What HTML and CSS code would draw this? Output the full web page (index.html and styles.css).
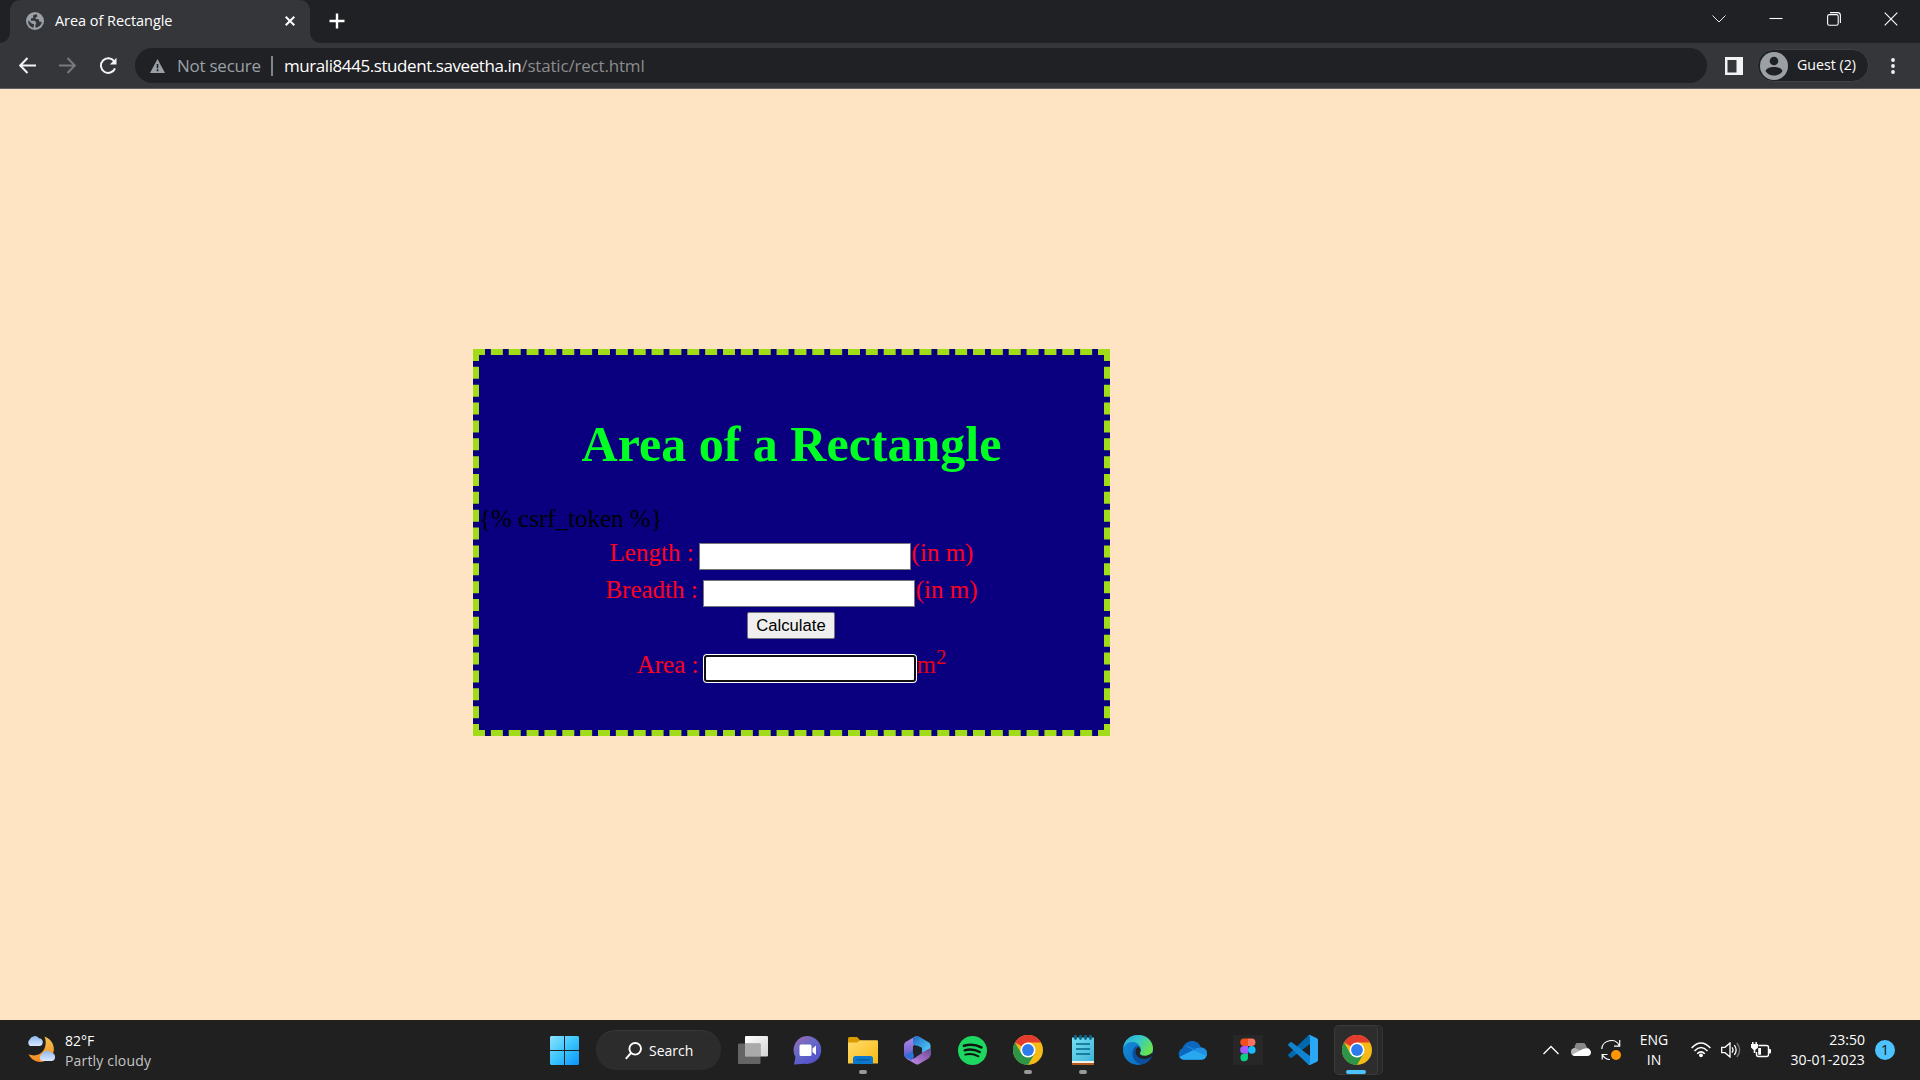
FILE: index.html
```html
<!DOCTYPE html>
<html lang="en">
<head>
<meta charset="utf-8">
<title>Area of Rectangle</title>
<link rel="stylesheet" href="styles.css">
</head>
<body>
<svg class="defs" width="0" height="0" aria-hidden="true">
  <defs>
    <linearGradient id="win" x1="0" y1="0" x2="1" y2="1"><stop offset="0" stop-color="#8be3ff"/><stop offset=".5" stop-color="#3bc5fc"/><stop offset="1" stop-color="#0a93fa"/></linearGradient>
    <linearGradient id="moon" x1="0" y1="0" x2="0" y2="1"><stop offset="0" stop-color="#f2c14c"/><stop offset="1" stop-color="#f58a1f"/></linearGradient>
    <linearGradient id="cloud" x1="0" y1="0" x2="0" y2="1"><stop offset="0" stop-color="#8fb7ee"/><stop offset="1" stop-color="#d9e8ff"/></linearGradient>
    <linearGradient id="folder" x1="0" y1="0" x2="1" y2="1"><stop offset="0" stop-color="#ffdc6a"/><stop offset="1" stop-color="#f9b915"/></linearGradient>
    <linearGradient id="chat" x1="0" y1="0" x2=".7" y2="1"><stop offset="0" stop-color="#a56bb0"/><stop offset=".45" stop-color="#6669c6"/><stop offset="1" stop-color="#5250cc"/></linearGradient>
    <linearGradient id="ma" x1="0" y1="0" x2="0" y2="1"><stop offset="0" stop-color="#b58be6"/><stop offset="1" stop-color="#4d54c9"/></linearGradient>
    <linearGradient id="mb" x1="0" y1="0" x2="1" y2="1"><stop offset="0" stop-color="#2368c8"/><stop offset="1" stop-color="#55ddff"/></linearGradient>
    <linearGradient id="mc" x1="0" y1="1" x2="1" y2="0"><stop offset="0" stop-color="#c893f5"/><stop offset="1" stop-color="#6d438f"/></linearGradient>
    <linearGradient id="ea" x1="0" y1="0" x2="1" y2=".5"><stop offset="0" stop-color="#2da9dc"/><stop offset=".5" stop-color="#35c7ce"/><stop offset="1" stop-color="#66e34f"/></linearGradient>
    <linearGradient id="eb" x1="0" y1="0" x2="1" y2="1"><stop offset="0" stop-color="#168fda"/><stop offset="1" stop-color="#0867bb"/></linearGradient>
    <linearGradient id="note" x1="0" y1="0" x2="1" y2="1"><stop offset="0" stop-color="#76dff4"/><stop offset="1" stop-color="#3fb5d8"/></linearGradient>
    <linearGradient id="tv" x1="0" y1="0" x2="1" y2="1"><stop offset="0" stop-color="#fff"/><stop offset="1" stop-color="#d4d4d4"/></linearGradient>
    <symbol id="chrome" viewBox="0 0 30 30">
      <circle cx="15" cy="15" r="15" fill="#f5ba16"/>
      <path d="M15 15 2 7.5A15 15 0 0 1 28 7.5H15Z" fill="#e33b2e"/>
      <path d="M2 7.5A15 15 0 0 0 15 30L21.5 18.7 15 15 8.5 18.8Z" fill="#2c9547"/>
      <circle cx="15" cy="15" r="7.5" fill="#fff"/><circle cx="15" cy="15" r="5.9" fill="#2d7bec"/>
    </symbol>
  </defs>
</svg>

<header class="browser">
  <div class="tabs">
    <div class="tab">
      <svg class="globe" width="18" height="18" viewBox="0 0 18 18"><circle cx="9" cy="9" r="9" fill="#9aa0a6"/><path d="M10.5 2 6.8 3.6 7.4 5.8 5 6.5 4.8 8.8H8.8C10 9 9.2 10.4 10.3 11L9.3 13.2 9.5 15.6C12.8 15.6 15.3 13 15.8 10L13.3 9.5 12.7 7.3 9.8 7 9.5 5.5 11.5 4.6ZM2.2 8.2 6 11.7 8.1 12 7.5 15.8C4.2 15 1.8 12 2.2 8.2Z" fill="#35363a"/></svg>
      <span class="tab-title">Area of Rectangle</span>
      <svg class="tab-close" width="10" height="10" viewBox="0 0 10 10"><path d="M.7.7l8.6 8.6M9.3.7.7 9.3" stroke="#fff" stroke-width="2"/></svg>
    </div>
    <svg class="new-tab" width="16" height="16" viewBox="0 0 16 16"><path d="M8 .5v15M.5 8h15" stroke="#fff" stroke-width="2.4"/></svg>
    <div class="window-controls">
      <svg width="14" height="14" viewBox="0 0 14 14"><path d="M.5 3.5 7 10l6.5-6.5"/></svg>
      <svg width="14" height="14" viewBox="0 0 14 14"><path d="M.5 6.500h13"/></svg>
      <svg width="14" height="14" viewBox="0 0 14 14"><rect x=".6" y="2.6" width="10.6" height="10.6" rx="1.8"/><path d="M3 .6H10.6A2.8 2.8 0 0 1 13.4 3.4V11"/></svg>
      <svg width="14" height="14" viewBox="0 0 14 14"><path d="M.7.7l12.6 12.6M13.3.7.7 13.3"/></svg>
    </div>
  </div>
  <div class="toolbar">
    <svg class="nav" width="17" height="17" viewBox="0 0 17 17"><path d="M17 8.500H2M8.500 1 1.200 8.500 8.500 16" fill="none" stroke="#f1f3f4" stroke-width="2"/></svg>
    <svg class="nav" width="17" height="17" viewBox="0 0 17 17"><path d="M0 8.500H15M8.500 1 15.800 8.500 8.500 16" fill="none" stroke="#78797d" stroke-width="2"/></svg>
    <svg class="nav reload" width="18" height="18" viewBox="0 0 18 18"><path d="M15.200 4.400A7.300 7.300 0 1 0 16 11.300" fill="none" stroke="#f1f3f4" stroke-width="2"/><path d="M17.500.8V7.500H10.800Z" fill="#f1f3f4"/></svg>
    <div class="omnibox">
      <svg width="15" height="14" viewBox="0 0 15 14"><path d="M7.500 0 15 14H0Z" fill="#9aa0a6"/><path d="M7.500 5v4.200M7.500 10.300v1.900" stroke="#202124" stroke-width="1.600"/></svg>
      <span class="insecure">Not secure</span><i class="divider"></i>
      <span class="host">murali8445.student.saveetha.in</span><span class="path">/static/rect.html</span>
    </div>
    <svg class="side" width="18" height="18" viewBox="0 0 18 18"><path d="M0 0H18V18H0ZM2.500 3V15.500H11.500V3Z" fill="#f1f3f4" fill-rule="evenodd"/></svg>
    <div class="profile">
      <svg width="28" height="28" viewBox="0 0 28 28"><circle cx="14" cy="14" r="14" fill="#9aa0a6"/><circle cx="14" cy="9" r="4.300" fill="#202124"/><path d="M5.500 19C7 13.800 21 13.800 22.500 19 19 25 9 25 5.500 19Z" fill="#202124"/></svg>
      <span>Guest (2)</span>
    </div>
    <svg class="menu" width="4" height="16" viewBox="0 0 4 16"><g fill="#f1f3f4"><circle cx="2" cy="2" r="1.900"/><circle cx="2" cy="8" r="1.900"/><circle cx="2" cy="14" r="1.900"/></g></svg>
  </div>
</header>

<main class="page">
  <section class="box">
    <h1>Area of a Rectangle</h1>
    <div class="token">{% csrf_token %}</div>
    <label class="row length"><span>Length :</span><input type="text"><span>(in m)</span></label>
    <label class="row breadth"><span>Breadth :</span><input type="text"><span>(in m)</span></label>
    <div class="action"><button type="button">Calculate</button></div>
    <label class="row area"><span>Area :</span><input class="focused" type="text"><span class="unit">m<sup>2</sup></span></label>
  </section>
</main>

<footer class="taskbar">
  <div class="weather">
    <svg width="30" height="28" viewBox="0 0 30 28"><path d="M18.500 1.500C28 5 30.500 15 25 22 19 29 7 29 2.500 19 8 22 14 20 17 16 20 12 20.500 6 18.500 1.500Z" fill="url(#moon)"/><path d="M4 11A4 4 0 0 1 3.500 4.800 5.500 5.500 0 0 1 13 3.200 4 4 0 0 1 14 11Z" fill="url(#cloud)"/><path d="M16 26A3.700 3.700 0 0 1 16 19.200 5.500 5.500 0 0 1 25.500 17.800 4.200 4.200 0 0 1 26 26Z" fill="url(#cloud)"/></svg>
    <div class="weather-text"><span>82°F</span><span class="sky">Partly cloudy</span></div>
  </div>
  <nav class="apps">
    <div class="app start"><svg width="29" height="29" viewBox="0 0 29 29"><path d="M1 0H14V14H0V1ZM15 0H28L29 1V14H15ZM0 15H14V29H1L0 28ZM15 15H29V28L28 29H15Z" fill="url(#win)"/></svg></div>
    <div class="search"><svg width="17" height="18" viewBox="0 0 17 18"><circle cx="10.200" cy="6.800" r="5.800"/><path d="M6 11 .8 16.800"/></svg><span>Search</span></div>
    <div class="app"><svg width="30" height="28" viewBox="0 0 30 28"><rect x="7" width="23" height="20.500" rx="1" fill="url(#tv)"/><rect y="7.500" width="22.500" height="20.500" rx="1" fill="#777" opacity=".78"/><path d="M7 7.500H22.500V20.500H7Z" fill="#aaa"/></svg></div>
    <div class="app"><svg width="29" height="29" viewBox="0 0 29 29"><path d="M15 0A14 14 0 1 1 12 27.800L1 28.500 2.500 21A14 14 0 0 1 15 0Z" fill="url(#chat)"/><rect x="6.500" y="8.500" width="12" height="11.500" rx="1.500" fill="#fff"/><path d="M19.500 12.500 23 9.500V19L19.500 16Z" fill="#fff"/></svg></div>
    <div class="app open"><svg width="30" height="27" viewBox="0 0 30 27"><path d="M0 1.500Q0 0 1.500 0H9L12.500 3.500V8H0Z" fill="#d99b00"/><path d="M0 5.500H9L12.500 3.200H29Q30 3.200 30 4.200V26.500H0Z" fill="url(#folder)"/><path d="M5 27V21.500Q5 19 7.500 19H22.500Q25 19 25 21.500V27Z" fill="#0b78cc"/><path d="M8.500 22.800H21.500" stroke="#07569e" stroke-width="1.200"/></svg></div>
    <div class="app"><svg width="27" height="29" viewBox="0 0 27 29"><path d="M12 0 1.500 6Q0 7 0 9V19Q0 21 2 22.300L8.500 25.500 9 10 17 4.500Z" fill="url(#ma)"/><path d="M12 0Q13.500-.3 15 .5L25 6.500Q26.500 7.500 26.500 9.500V19.500L18 17V12L9 8.500V2Z" fill="url(#mb)"/><path d="M26.500 18Q26.500 21 24.500 22.500L15 28Q13.500 29 11.500 28L2 22.500 10 22.500 19 16 26.500 12Z" fill="url(#mc)"/><path d="M0 19.500 9 15 10 21 7 24.500Z" fill="#2f72d7"/><path d="M13.300 9.500 18 12V17L13.300 19.500 9 17V12Z" fill="#20232a"/></svg></div>
    <div class="app"><svg width="29" height="29" viewBox="0 0 29 29"><circle cx="14.500" cy="14.500" r="14.500" fill="#1ed760"/><g fill="none" stroke="#101510" stroke-linecap="round"><path d="M6 9.800C12 8 18 8.600 23.300 11.400" stroke-width="2.700"/><path d="M6.600 14.300C12 12.800 17 13.500 21.800 16" stroke-width="2.300"/><path d="M7.200 18.600C12 17.400 16 18 20.400 20.300" stroke-width="1.900"/></g></svg></div>
    <div class="app open"><svg width="30" height="30"><use href="#chrome"/></svg></div>
    <div class="app open"><svg width="22" height="30" viewBox="0 0 22 30"><path d="M0 2.500H22V27H0Z" fill="url(#note)"/><path d="M0 26H22V28H0Z" fill="#f4eee9"/><path d="M0 28H22V30H0Z" fill="#b3591b"/><path d="M4 9H18M4 14H18M4 19H18" stroke="#066789" stroke-width="1.700"/><path d="M3.500 1v2.500M8.500 1v2.500M13.500 1v2.500M18.500 1v2.500" stroke="#0b6787" stroke-width="2.800" stroke-linecap="round"/></svg></div>
    <div class="app"><svg width="30" height="30" viewBox="0 0 30 30"><circle cx="15" cy="15" r="15" fill="url(#eb)"/><path d="M0 14C1 5 7 0 15 0 24 0 30 6 30 13.500 30 18 27 21 22.500 21 18 21 16 19 17 17.800 19 15 17.500 7 9 7 5 7 1 10 0 14Z" fill="url(#ea)"/><path d="M13 11C6 17 10 29 20 29.200 24 28 27.500 25 29 21.500 24 24 18 24 15 20.500 11.500 17 12 13 15 11Z" fill="#0b4f9e"/><path d="M15 11.500C11 15 12 20 16 22.500 20 25 26 24 28.700 21.500L30 18 28 18.500C25 21 20 21.500 18 20 16.500 19 16.500 18.500 17.300 17 18.500 15 17 12 15 11.500Z" fill="#202122"/></svg></div>
    <div class="app"><svg width="29" height="19" viewBox="0 0 29 19"><path d="M6 18.500C0 18.500-1.500 10 4.500 7.200 8-2 20-2.500 23 6.500 31 7.500 30.500 18.500 24 18.500Z" fill="#0c67bd"/><path d="M8 5.500C12 4 15 8 28.500 13.500 28 17 26 18.500 24 18.500H6Q3 18.500 1.500 16L15 9Z" fill="#1680d9"/><path d="M1.500 16 16 8.800Q18 6.500 23 6.500C29 7 30 12 28.500 14.500L23 18.500H6Q3 18.500 1.500 16Z" fill="#1e91e4"/><path d="M1.500 16 15 9.500 28.500 14.500Q27 18.500 24 18.500H6Q3 18.500 1.500 16Z" fill="#29a8f0"/></svg></div>
    <div class="app"><svg width="30" height="30" viewBox="0 0 30 30"><rect width="30" height="30" rx="2" fill="#272727"/><path d="M15 3.500H11A3.700 3.700 0 0 0 11 11H15Z" fill="#f24e1e"/><path d="M15 3.500H18.700A3.700 3.700 0 0 1 18.700 11H15Z" fill="#ff7262"/><path d="M15 11H11A3.800 3.800 0 0 0 11 18.700H15Z" fill="#a259ff"/><circle cx="18.800" cy="14.900" r="3.800" fill="#1abcfe"/><path d="M15 18.700H11A3.800 3.800 0 1 0 15 22.500Z" fill="#0acf83"/></svg></div>
    <div class="app"><svg width="30" height="30" viewBox="0 0 30 30"><path d="M22 0V9L4 22.500Q3 23.300 2 22.500L.5 21Q-.3 20 .6 19.200L20 .8Z" fill="#0068ad"/><path d="M22 30V21L4 7.500Q3 6.700 2 7.500L.5 9Q-.3 10 .6 10.800L20 29.200Z" fill="#1184d0"/><path d="M22 0 29 3.300Q30 3.800 30 5V25Q30 26.200 29 26.700L22 30 20 29.200Q22 29.500 22 27.500V2.500Q22 .5 20 .8Z" fill="#2aa8f5"/></svg></div>
    <div class="app active"><svg width="30" height="30"><use href="#chrome"/></svg></div>
  </nav>
  <div class="tray">
    <svg class="chevron" width="16" height="10" viewBox="0 0 16 10"><path d="M.5 9 8 1.500 15.500 9" fill="none" stroke="#fff" stroke-width="1.300"/></svg>
    <svg class="drive" width="20" height="14" viewBox="0 0 20 14"><path d="M4 13A4 4 0 0 1 4 5 6 6 0 0 1 15.500 4.500 4.400 4.400 0 0 1 16 13Z" fill="#b7b7b7"/><path d="M3.500 4.800A6 6 0 0 1 15.500 4.500L9 7.500Z" fill="#888"/><path d="M1.500 11.500 12 6Q19 4 20 9 20 13 16 13H4Q2.500 13 1.500 11.500Z" fill="#fff"/></svg>
    <svg class="sync" width="20" height="20" viewBox="0 0 20 20"><g fill="none" stroke="#fff" stroke-width="1.200"><path d="M.8 9C1 0 15-3 18.300 6M18.700 0V6.200H13M1.200 19.500V14.500H6.500M1.200 14.500Q4 19.500 9 19.500"/></g><circle cx="15" cy="15" r="5" fill="#ff9500"/></svg>
    <div class="language"><span>ENG</span><span>IN</span></div>
    <svg class="wifi" width="20" height="16" viewBox="0 0 20 16"><g fill="none" stroke="#fff" stroke-width="1.500"><path d="M.6 6Q10-4 19.400 6M3.500 8.900Q10 2.200 16.500 8.900M6.200 11.700Q10 8 13.800 11.700"/></g><circle cx="10" cy="13.300" r="1.900" fill="#fff"/></svg>
    <svg class="volume" width="20" height="16" viewBox="0 0 20 16"><g fill="none" stroke="#fff" stroke-width="1.300"><path d="M.7 5.300H4L9 1V15L4 10.700H.7ZM11 5.400Q13 8 11 10.600M13.300 3.200Q17 8 13.300 12.800"/><path d="M15.800 1Q21.500 8 15.800 15" stroke="#777"/></g></svg>
    <svg class="battery" width="20" height="17" viewBox="0 0 20 17"><path d="M7.500 3.500H15.500Q17.500 3.500 17.500 5.500V12.500Q17.500 14.500 15.500 14.500H7.500Q5.500 14.500 5.500 12.500V10" fill="none" stroke="#fff" stroke-width="1.400"/><path d="M18 7h1q1 0 1 1v2.500q0 1-1 1h-1ZM7.200 6H10V12.700H7.200Z" fill="#fff"/><path d="M1.800 0V4M5.200 0V4" stroke="#fff" stroke-width="1.500"/><path d="M0 2H7V5.500L4.300 8V11H2.700V8L0 5.500Z" fill="#fff"/></svg>
    <div class="clock"><span>23:50</span><span class="date">30-01-2023</span></div>
    <span class="badge">1</span>
  </div>
</footer>
</body>
</html>
```
FILE: styles.css
```css
* { box-sizing: border-box; }
body { margin: 0; width: 1920px; height: 1080px; overflow: hidden; display: flex; flex-direction: column; background: #ffe4c4; font-family: "Open Sans", "Noto Sans", sans-serif; color: #fff; }
svg { display: block; flex-shrink: 0; }
.defs { position: absolute; }
span { white-space: nowrap; }

.browser { height: 89px; flex-shrink: 0; background: #35363a; border-bottom: 1px solid #5f6368; }
.tabs { height: 43px; background: #202124; display: flex; align-items: flex-start; }
.tab { position: relative; width: 300px; height: 43px; margin-left: 10px; padding: 0 15px 2px 16px; display: flex; align-items: center; background: #35363a; border-radius: 10px 10px 0 0; }
.tab::before, .tab::after { content: ""; position: absolute; bottom: 0; width: 10px; height: 10px; }
.tab::before { left: -10px; background: radial-gradient(circle at 0 0, transparent 9.5px, #35363a 10px); }
.tab::after { right: -10px; background: radial-gradient(circle at 100% 0, transparent 9.5px, #35363a 10px); }
.tab-title { margin-left: 11px; font-size: 14.5px; letter-spacing: -0.05px; }
.tab-close { margin-left: auto; }
.new-tab { margin: 13px 0 0 19px; }
.window-controls { margin: 12px 22px 0 auto; display: flex; gap: 43.5px; }
.window-controls svg { fill: none; stroke: #fff; stroke-width: 1.1; }
.window-controls svg:first-child { stroke-width: 0.9; }
.toolbar { height: 45px; display: flex; align-items: center; }
.nav { margin-left: 19px; }
.nav + .nav { margin-left: 23px; }
.omnibox { width: 1572px; height: 35px; margin-left: 18px; padding: 0 15px; border-radius: 18px; background: #202124; display: flex; align-items: center; font-size: 17px; }
.insecure { width: 85px; margin-left: 12px; color: #9aa0a6; letter-spacing: -0.25px; }
.divider { width: 2px; height: 20px; margin: 0 11px 0 9px; background: #80868b; }
.host { letter-spacing: -0.43px; }
.path { color: #8b8c8e; letter-spacing: -0.18px; }
.side { margin-left: 18px; }
.profile { height: 33px; width: 112px; margin-left: 14px; padding-left: 2px; border: 1px solid #404145; border-radius: 17px; background: #202124; display: flex; align-items: center; font-size: 14.2px; }
.profile span { margin-left: 9px; line-height: 18px; padding-bottom: 2px; }
.menu { margin-left: 22px; }

.page { flex: 1; padding: 260px 0 0 473px; font-family: "Liberation Serif", "Times New Roman", serif; font-size: 25px; }
.box { width: 637px; height: 387px; border: 6px dashed #a2dc18; background: #0a007f; color: #ff0020; }
.box h1 { margin: 60px 0 0; height: 58px; line-height: 58px; text-align: center; font-size: 50px; color: #00ff22; }
.token { margin-top: 31px; height: 29px; line-height: 29px; color: #000; }
.row { display: flex; justify-content: center; align-items: flex-start; line-height: 29px; }
.row input { width: 212px; height: 27px; margin: 5px 1px 0 5px; padding: 0; border: 1px solid #767676; background: #fff; outline: none; }
.length { height: 37px; margin-top: 5px; }
.breadth { height: 37px; }
.action { height: 27px; padding-right: 1px; display: flex; justify-content: center; }
button { width: 88px; height: 27px; padding: 0; border: 1px solid #767676; border-radius: 2px; background: #efefef; color: #000; font: 16.667px "Liberation Sans", Arial, sans-serif; }
.area { margin-top: 11px; }
.area .focused { margin: 5px 0 0 6px; border: 2px solid #101010; border-radius: 3px; box-shadow: 0 0 0 1px #fff; }
.unit { color: #e60010; }
sup { font-size: 20.8px; line-height: 0; vertical-align: super; }

.taskbar { height: 60px; flex-shrink: 0; background: #202020; display: grid; grid-template-columns: 537px 849px 1fr; font-size: 14px; }
.weather { display: flex; padding: 15px 0 0 26px; }
.weather-text { margin: -4px 0 0 9px; display: flex; flex-direction: column; line-height: 20px; }
.sky { color: #c4c4c4; letter-spacing: 0.17px; }
.apps { display: flex; }
.app { position: relative; width: 55px; height: 60px; display: flex; align-items: center; justify-content: center; flex-shrink: 0; }
.search { width: 125px; height: 40px; margin: 10px 4px 0 4px; padding-left: 29px; border-top: 1px solid #393939; border-radius: 20px; background: #2c2c2c; display: flex; align-items: center; gap: 7px; }
.search svg { fill: none; stroke: #fff; stroke-width: 1.9; }
.open::after, .active::after { content: ""; position: absolute; bottom: 6px; width: 8px; height: 4px; border-radius: 2px; background: #999; }
.active { width: 44px; height: 50px; margin: 5px 0 0 4px; padding-left: 4px; background: #2d2d2d; border: 1px solid #3b3b3b; border-radius: 5px; box-shadow: 5px 0 0 -1px #292929, 5px 0 0 0 #353535; }
.active svg { margin-left: -2px; }
.active::after { left: 11px; width: 20px; bottom: 0; background: #4cc2ff; }
.tray { display: flex; align-items: center; padding-left: 157px; }
.drive { margin-left: 12px; }
.sync { margin-left: 10px; }
.language { width: 50px; margin-left: 8px; display: flex; flex-direction: column; align-items: center; line-height: 20px; }
.wifi { margin-left: 12px; }
.volume { margin-left: 10px; }
.battery { margin-left: 10px; }
.clock { width: 94px; display: flex; flex-direction: column; align-items: flex-end; line-height: 20px; }
.date { letter-spacing: 0.15px; }
.badge { width: 20px; height: 20px; margin-left: 10px; border-radius: 50%; background: #4cc2ff; color: #111; text-align: center; line-height: 20px; }
```
